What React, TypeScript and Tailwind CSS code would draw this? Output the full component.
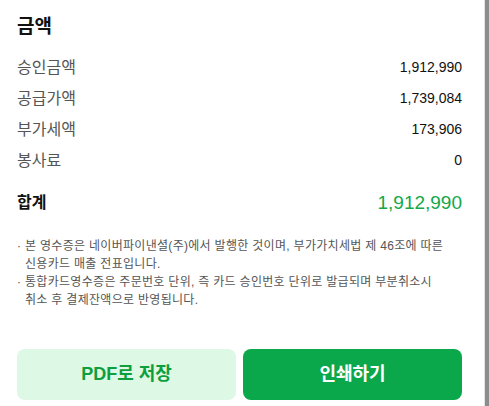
export default function App() {
  const rows: [string, string][] = [
    ["승인금액", "1,912,990"],
    ["공급가액", "1,739,084"],
    ["부가세액", "173,906"],
    ["봉사료", "0"],
  ];
  return (
    <div className="flex h-[406px] w-[489px] bg-white font-['Liberation_Sans','Noto_Sans_CJK_KR',sans-serif]">
      <div className="flex w-[484px] flex-col pl-[17px] pr-[22px] pt-[15px]">
        <h2 className="h-[24px] text-[19px] font-bold leading-[24px] text-[#111]">금액</h2>
        <div className="mt-[13px] flex flex-col">
          {rows.map(([k, v]) => (
            <div key={k} className="flex h-[31px] items-center justify-between">
              <span className="text-[16px] text-[#555]">{k}</span>
              <span className="text-[14px] text-[#111]">{v}</span>
            </div>
          ))}
        </div>
        <div className="mt-[7px] flex h-[40px] items-center justify-between">
          <span className="text-[16px] font-bold text-[#111]">합계</span>
          <span className="text-[19px] text-[#13a84b]">1,912,990</span>
        </div>
        <ul className="mt-[14px] flex flex-col text-[12px] leading-[18px] tracking-[0.3px] text-[#555]">
          <li className="flex">
            <span className="w-[8px] shrink-0">·</span>
            <span>
              본 영수증은 네이버파이낸셜(주)에서 발행한 것이며, 부가가치세법 제 46조에 따른
              <br />
              신용카드 매출 전표입니다.
            </span>
          </li>
          <li className="flex">
            <span className="w-[8px] shrink-0">·</span>
            <span>
              통합카드영수증은 주문번호 단위, 즉 카드 승인번호 단위로 발급되며 부분취소시
              <br />
              취소 후 결제잔액으로 반영됩니다.
            </span>
          </li>
        </ul>
        <div className="mt-[40px] flex gap-[7px]">
          <button className="flex h-[51px] flex-1 items-center justify-center rounded-[8px] bg-[#ddf8e4] text-[18px] font-bold text-[#0d9e3e]">
            PDF로 저장
          </button>
          <button className="flex h-[51px] flex-1 items-center justify-center rounded-[8px] bg-[#0aa84a] text-[18px] font-bold text-white">
            인쇄하기
          </button>
        </div>
      </div>
      <div className="h-full w-[5px] border-l border-[#e4e4e4] bg-[#8c8c8c]" />
    </div>
  );
}
